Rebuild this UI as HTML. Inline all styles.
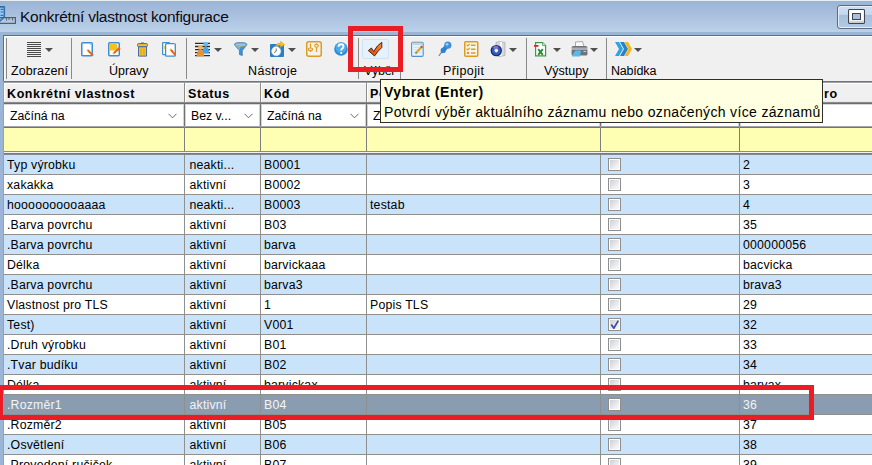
<!DOCTYPE html>
<html><head><meta charset="utf-8">
<style>
*{margin:0;padding:0;box-sizing:border-box}
html,body{width:872px;height:465px;overflow:hidden;background:#f0f0f0}
body{position:relative;font-family:"Liberation Sans",sans-serif;color:#000}
.a{position:absolute}
.t{position:absolute;white-space:pre;line-height:1}
#title{left:0;top:0;width:872px;height:36px;background:linear-gradient(#9bb4d4 0px,#a5bddb 10px,#b3cae5 24px,#bcd2ea 31px);border-top:1px solid #e8eef6}
#tband{left:0;top:32px;width:872px;height:3px;background:#9bb5d3}
#lstrip{left:0;top:35px;width:3px;height:430px;background:#9ab5d5}
#tb{left:3px;top:35px;width:869px;height:47px;background:#f0f0f0;border-top:1px solid #6b6b70;border-left:1px solid #6b6b70}
.sep{position:absolute;top:38px;width:1px;height:41px;background:#8a8a8a}
.lbl{position:absolute;top:65px;font-size:12.5px;white-space:pre;line-height:1}
.dd{position:absolute;width:0;height:0;border-left:4px solid transparent;border-right:4px solid transparent;border-top:4px solid #505050}
#grid{left:3px;top:81px;width:869px;height:384px;background:#fff}
.hl{position:absolute;left:3px;width:869px;height:1px}
.vl{position:absolute;width:1px;background:#8f8f8f}
.row{position:absolute;left:4px;width:868px;height:19px}
.c{position:absolute;top:4px;font-size:12.3px;letter-spacing:0.2px;white-space:pre;line-height:1}
.cb{position:absolute;left:608px;top:3px;width:13px;height:13px;border:1px solid #8e8e8e;background:linear-gradient(135deg,#c6cad2,#f2f2f4 70%,#fafafa);box-shadow:inset 0 0 0 1px #fff}
.hd{position:absolute;top:88px;font-size:12.5px;font-weight:bold;letter-spacing:0.6px;white-space:pre;line-height:1}
.ft{position:absolute;top:110px;font-size:12.3px;white-space:pre;line-height:1}
.chev{position:absolute;top:112.5px}
</style></head><body>

<!-- title bar -->
<div id="title" class="a"></div>
<div id="tband" class="a"></div>
<div id="lstrip" class="a"></div>
<svg class="a" style="left:0;top:5px" width="18" height="20" viewBox="0 0 18 20">
  <path d="M-1 1.5H4.6V12.2L-1 17.5Z" fill="#3d88cf" stroke="#2a64a6" stroke-width="0.9"/>
  <path d="M0 3H3.4V11.5L0 14.5Z" fill="#9ccaf0"/>
  <path d="M0.5 4.3h2.8M0.5 7h2.8M0.5 10.3h2.8" stroke="#2f6fb8" stroke-width="1.2"/>
  <rect x="-1" y="12.6" width="16.4" height="5.8" fill="none" stroke="#5b5b5e" stroke-width="1.2"/>
  <path d="M6.5 13v2.6M9 13v2M12.5 13v2.6" stroke="#666" stroke-width="1"/>
</svg>
<div class="t" style="left:20px;top:9px;font-size:15.5px;letter-spacing:-0.25px;color:#0a0a14">Konkrétní vlastnost konfigurace</div>
<!-- restore button -->
<div class="a" style="left:837px;top:5px;width:40px;height:24px;border:1px solid #5d6b80;border-radius:3px;background:linear-gradient(#d0e0f2 0,#c4d7ee 38%,#a7bfdc 42%,#b3cae5 100%);box-shadow:inset 0 0 0 1px #e6eef8"></div>
<div class="a" style="left:848px;top:9px;width:17px;height:15px;border:1px solid #3e4450;border-radius:1px;background:#fff;box-shadow:inset 0 -2px 2px #c8c8c8"></div>
<div class="a" style="left:852px;top:13px;width:9px;height:7px;border:1px solid #3e4450;background:#a9c0dc"></div>

<!-- toolbar -->
<div id="tb" class="a"></div>
<div class="a" style="left:4px;top:36px;width:868px;height:1px;background:#fff"></div>
<div class="a" style="left:4px;top:36px;width:1px;height:45px;background:#fff"></div>
<div class="sep" style="left:6px"></div>
<div class="sep" style="left:71px"></div>
<div class="sep" style="left:186px"></div>
<div class="sep" style="left:358px"></div>
<div class="sep" style="left:400px"></div>
<div class="sep" style="left:526px"></div>
<div class="sep" style="left:606px"></div>

<!-- Zobrazeni icon -->
<svg class="a" style="left:27px;top:41px" width="15" height="17" viewBox="0 0 15 17">
  <path d="M0 1.5h14M0 3.5h14M0 5.5h14M0 7.5h14M0 9.5h14M0 11.5h14M0 13.5h14M0 15.5h14" stroke="#4a4a4a" stroke-width="1"/>
</svg>
<div class="dd" style="left:45px;top:48px"></div>
<div class="lbl" style="left:11px;letter-spacing:0.1px">Zobrazení</div>

<!-- Upravy icons -->
<svg class="a" style="left:81px;top:42px" width="14" height="15" viewBox="0 0 14 15">
  <rect x="0.75" y="0.75" width="10.5" height="13" rx="1" fill="#fff" stroke="#3b8ed4" stroke-width="1.5"/>
  <path d="M8 1.5h2.5v2.5z" fill="#9ccbf0"/>
  <path d="M6.5 8l5.5 5.5" stroke="#e8641e" stroke-width="2"/>
  <path d="M6 7.5l1 1" stroke="#f3c060" stroke-width="2"/>
</svg>
<svg class="a" style="left:108px;top:42px" width="14" height="15" viewBox="0 0 14 15">
  <rect x="0.75" y="0.75" width="10.5" height="13" rx="1" fill="#fff" stroke="#3b8ed4" stroke-width="1.5"/>
  <path d="M2 2h6.5l1 1.5v5h-7.5z" fill="#f9bf1c"/>
  <path d="M5.5 11.5l6.5-6" stroke="#e8641e" stroke-width="2"/>
  <path d="M5 12l1-1" stroke="#f3c060" stroke-width="2"/>
</svg>
<svg class="a" style="left:137px;top:42px" width="11" height="15" viewBox="0 0 11 15">
  <path d="M3.5 1.5l2-1.2 2 1.2z" fill="#f8c12c" stroke="#4a6ea0" stroke-width="0.7"/>
  <rect x="0.6" y="1.6" width="9.8" height="3" rx="0.8" fill="#f8c12c" stroke="#4a6ea0" stroke-width="1"/>
  <path d="M1.5 4.8h8v9.3h-8z" fill="#f8c12c" stroke="#4a6ea0" stroke-width="1"/>
  <path d="M4 6.5v6M7 6.5v6" stroke="#d99a10" stroke-width="1"/>
</svg>
<svg class="a" style="left:162px;top:42px" width="14" height="15" viewBox="0 0 14 15">
  <rect x="0.6" y="0.6" width="7" height="12" rx="0.8" fill="#fff" stroke="#3b8ed4" stroke-width="1.2"/>
  <rect x="1.5" y="4" width="1.2" height="3" fill="#f9bf1c"/>
  <rect x="3.6" y="1.6" width="9.7" height="12.6" rx="1" fill="#fff" stroke="#3b8ed4" stroke-width="1.3"/>
  <path d="M11 1.8h2v2z" fill="#9ccbf0"/>
  <path d="M8.5 7.5l5 5.5" stroke="#e8641e" stroke-width="2"/>
  <path d="M8 7l1 1" stroke="#f3c060" stroke-width="1.8"/>
</svg>
<div class="lbl" style="left:109px">Úpravy</div>

<!-- Nastroje icons -->
<svg class="a" style="left:195px;top:42px" width="16" height="15" viewBox="0 0 16 15">
  <path d="M0 1.3h15M0 4.5h15M0 7.7h15M0 10.7h15M0 13.7h15" stroke="#2a2a2a" stroke-width="1.3"/>
  <circle cx="10.8" cy="2.3" r="2.4" fill="#6ab8e8"/>
  <path d="M7.2 11.2Q7.6 4.8 10.8 4.4Q14 4.8 14.4 11.2z" fill="#4aa3de"/>
  <circle cx="5.4" cy="5.6" r="2.4" fill="#f9b35a"/>
  <path d="M1.6 14.2Q2 8.2 5.4 7.6Q8.8 8.2 9.2 14.2z" fill="#f38d24"/>
</svg>
<div class="dd" style="left:214px;top:48px"></div>
<svg class="a" style="left:234px;top:42px" width="14" height="14" viewBox="0 0 14 14">
  <path d="M0.4 2.8Q0.4 0.4 6.7 0.4Q13 0.4 13 2.8L8.3 8.6V13.6L5.4 12.6V8.6Z" fill="#3b93d6" stroke="#2a6aa8" stroke-width="0.6"/>
  <path d="M5.4 8.6L2 4h5z" fill="#6ab8ea"/>
  <ellipse cx="6.7" cy="2.7" rx="5.6" ry="1.5" fill="#8ccaf0" stroke="#d9a030" stroke-width="0.9"/>
</svg>
<div class="dd" style="left:251px;top:48px"></div>
<svg class="a" style="left:270px;top:41px" width="15" height="16" viewBox="0 0 15 16">
  <rect x="0" y="3" width="14" height="13" rx="1" fill="#2a7ec4"/>
  <circle cx="6.2" cy="10.2" r="4.6" fill="#fff" stroke="#cfd8e0" stroke-width="0.6"/>
  <path d="M6.2 7.5v2.7l-2 1.5" stroke="#4a5a6a" stroke-width="0.9" fill="none"/>
  <path d="M5.5 5.5Q7 1.5 11 2.2L10.4 0.2L14.6 3.5L10.2 6.4L10.8 4.4Q8 4 5.5 5.5z" fill="#f9c01a" stroke="#e09a10" stroke-width="0.5"/>
</svg>
<div class="dd" style="left:288px;top:48px"></div>
<svg class="a" style="left:306px;top:41px" width="16" height="16" viewBox="0 0 16 16">
  <rect x="0.75" y="0.75" width="14.5" height="14.5" rx="2" fill="#f6f2ea" stroke="#dc9c22" stroke-width="1.5"/>
  <path d="M4.5 2.5v8.5M10.5 2.5v8.5" stroke="#dc9c22" stroke-width="1.2"/>
  <ellipse cx="4.5" cy="8.3" rx="2.2" ry="1.3" fill="#f6f2ea" stroke="#dc9c22" stroke-width="1.1"/>
  <ellipse cx="10.5" cy="4.8" rx="1.8" ry="1.4" fill="#f6f2ea" stroke="#dc9c22" stroke-width="1.1"/>
</svg>
<svg class="a" style="left:334px;top:42px" width="14" height="14" viewBox="0 0 14 14">
  <circle cx="7" cy="7" r="6.8" fill="#2c8fd6"/>
  <circle cx="7" cy="5.6" r="5.4" fill="#4caaea"/>
  <path d="M4.6 4.8Q4.6 2.3 7 2.3Q9.5 2.3 9.5 4.6Q9.5 6 7.9 6.9Q7.2 7.3 7.2 8.6" stroke="#fff" stroke-width="1.9" fill="none"/>
  <circle cx="7.2" cy="11" r="1.1" fill="#fff"/>
</svg>
<div class="lbl" style="left:248px;letter-spacing:0.35px">Nástroje</div>

<!-- Vyber -->
<div class="a" style="left:362px;top:39px;width:27px;height:20px;background:#e5f1fb;border:1px solid #cde3f6;border-radius:2px"></div>
<svg class="a" style="left:366px;top:41px" width="18" height="17" viewBox="0 0 18 17">
  <defs><linearGradient id="ck" x1="0" y1="1" x2="1" y2="0"><stop offset="0" stop-color="#e0400e"/><stop offset="1" stop-color="#f59030"/></linearGradient></defs>
  <path d="M2.3 9.6L5.4 7L7.7 10.5Q11 4.2 15.8 1.3L15.8 6.5Q12 9.8 8.5 15Z" fill="url(#ck)" stroke="#3a1a0a" stroke-width="0.9" stroke-linejoin="round"/>
</svg>
<div class="lbl" style="left:364px;letter-spacing:-0.3px">Výběr</div>

<!-- Pripojit -->
<svg class="a" style="left:411px;top:41px" width="13" height="16" viewBox="0 0 13 16">
  <rect x="0.6" y="1.2" width="11.6" height="14.2" rx="1.2" fill="#e6f2fc" stroke="#4f92d2" stroke-width="1.1"/>
  <path d="M2 3h9" stroke="#a8cdee" stroke-width="1.5"/>
  <path d="M2.5 1.2h1M5.5 1.2h1M8.5 1.2h1" stroke="#e8c040" stroke-width="1.4"/>
  <path d="M2.5 6.5h8M2.5 9h8M2.5 11.5h8" stroke="#c6dff4" stroke-width="0.8"/>
  <path d="M5.2 11.8L10.8 5.8" stroke="#f0a21e" stroke-width="2.2"/>
  <path d="M10 6.6l1.2-1.3" stroke="#d04020" stroke-width="2.2"/>
  <path d="M4.6 12.5l0.8-0.9" stroke="#555" stroke-width="1.5"/>
</svg>
<svg class="a" style="left:438px;top:41px" width="14" height="16" viewBox="0 0 14 16">
  <path d="M0.8 14.8L4.5 10.2" stroke="#888" stroke-width="1.3"/>
  <path d="M3.2 8.2L6.8 4.6L9.8 7.6L6.2 11.2Z" fill="#2a78c8"/>
  <circle cx="9.8" cy="4.2" r="3.6" fill="#3a92dc"/>
  <circle cx="9" cy="3.3" r="1.4" fill="#9ad0f6"/>
  <circle cx="5.2" cy="9.4" r="2.6" fill="#2f84d2"/>
</svg>
<svg class="a" style="left:464px;top:41px" width="15" height="16" viewBox="0 0 15 16">
  <rect x="0.75" y="0.75" width="13" height="14.5" rx="1" fill="#f8f4ea" stroke="#dc9c22" stroke-width="1.5"/>
  <path d="M2.6 3.6l1.2 1.2 2-2M2.6 7.6l1.2 1.2 2-2" stroke="#dc9c22" stroke-width="1.2" fill="none"/>
  <circle cx="4" cy="12" r="1.3" fill="#dc9c22"/>
  <path d="M7 4.2h4.5M7 8.2h4.5M7 12h4.5" stroke="#dc9c22" stroke-width="1.4"/>
</svg>
<svg class="a" style="left:490px;top:41px" width="16" height="16" viewBox="0 0 16 16">
  <path d="M6 1.5L9.5 0.5L15 1.5V14.5L9.5 15.5L6 14.5Z" fill="#d6d8dc" stroke="#9a9ea4" stroke-width="0.6"/>
  <path d="M11 1v14" stroke="#fff" stroke-width="1.5"/>
  <circle cx="6.3" cy="9.6" r="5.7" fill="#1a2a6a"/>
  <circle cx="6.3" cy="9.6" r="4.4" fill="#3060c0"/>
  <path d="M6.3 9.6L2.5 6.5A4.4 4.4 0 0 1 8.5 5.8Z" fill="#8a6ad8"/>
  <circle cx="6.3" cy="9.6" r="1.8" fill="#f4f0d8"/>
</svg>
<div class="dd" style="left:509px;top:48px"></div>
<div class="lbl" style="left:443px;letter-spacing:0.4px">Připojit</div>

<!-- Vystupy -->
<svg class="a" style="left:534px;top:41px" width="13" height="16" viewBox="0 0 13 16">
  <path d="M1.6 1.6h7l3 3v10.3h-10z" fill="#fff" stroke="#3a9a48" stroke-width="1.2"/>
  <path d="M8.6 1.6v3h3" fill="#d8f0d8" stroke="#3a9a48" stroke-width="0.8"/>
  <rect x="0" y="4" width="4.5" height="1.8" fill="#d42a2a"/>
  <path d="M4.2 8.2l4.6 5.6M8.8 8.2l-4.6 5.6" stroke="#2a8a38" stroke-width="1.9"/>
</svg>
<div class="dd" style="left:553px;top:48px"></div>
<svg class="a" style="left:571px;top:41px" width="17" height="16" viewBox="0 0 17 16">
  <path d="M4.5 1L11.5 0.5L13 5.5H4.5Z" fill="#fafafa" stroke="#8a8a8a" stroke-width="0.7"/>
  <path d="M0.8 6.2Q1 5 2.5 5H14.5Q16 5 16.2 6.2L16.5 13Q16.5 14.5 15 14.5H2Q0.5 14.5 0.5 13Z" fill="#6e747c"/>
  <path d="M1 6.5H16V9H1Z" fill="#a8aeb4"/>
  <path d="M12.5 10.5h2.5" stroke="#d0d4d8" stroke-width="1"/>
  <path d="M2.5 12L4.5 9.5H10L9 15.5H1Z" fill="#58b8ec"/>
</svg>
<div class="dd" style="left:590px;top:48px"></div>
<div class="lbl" style="left:544px">Výstupy</div>

<!-- Nabidka -->
<svg class="a" style="left:615px;top:42px" width="17" height="14" viewBox="0 0 17 14">
  <path d="M0 0h4l4 7-4 7h-4l4-7z" fill="#29a4e6"/>
  <path d="M5 0h4l4 7-4 7h-4l4-7z" fill="#2d7fc8"/>
  <path d="M9.5 0h3.5l4 7-4 7h-3.5l4-7z" fill="#f5b51c"/>
</svg>
<div class="dd" style="left:634px;top:48px"></div>
<div class="lbl" style="left:611px;letter-spacing:-0.2px">Nabídka</div>

<!-- grid -->
<div id="grid" class="a"></div>
<!-- header -->
<div class="a" style="left:3px;top:81px;width:869px;height:23px;background:#f0f0f0;border-top:1px solid #72767e"></div>
<div class="hl" style="top:101px;background:#e6e6e6"></div>
<div class="hl" style="top:102px;background:#8c8c8c"></div>
<div class="hl" style="top:103px;background:#6c6c6c"></div>
<div class="hl" style="top:104px;background:#d8d8d8"></div>
<div class="a" style="left:4px;top:82px;width:868px;height:1px;background:#a0a0a0"></div>
<div class="a" style="left:4px;top:83px;width:868px;height:1px;background:#fff"></div>
<div class="a" style="left:4px;top:83px;width:1px;height:19px;background:#fff"></div>
<div class="a" style="left:184px;top:83px;width:1px;height:20px;background:#8c8c8c"></div>
<div class="a" style="left:185px;top:83px;width:1px;height:19px;background:#fff"></div>
<div class="a" style="left:260px;top:83px;width:1px;height:20px;background:#8c8c8c"></div>
<div class="a" style="left:261px;top:83px;width:1px;height:19px;background:#fff"></div>
<div class="a" style="left:366px;top:83px;width:1px;height:20px;background:#8c8c8c"></div>
<div class="a" style="left:367px;top:83px;width:1px;height:19px;background:#fff"></div>
<div class="a" style="left:600px;top:83px;width:1px;height:20px;background:#8c8c8c"></div>
<div class="a" style="left:739px;top:83px;width:1px;height:20px;background:#8c8c8c"></div>
<div class="hd" style="left:7px">Konkrétní vlastnost</div>
<div class="hd" style="left:188px">Status</div>
<div class="hd" style="left:264px">Kód</div>
<div class="hd" style="left:370px">Popis</div>
<div class="hd" style="left:743px">Číslo</div><div class="hd" style="left:824px">ro</div>

<!-- filter row -->
<div class="a" style="left:4px;top:105px;width:868px;height:21px;background:#fff"></div>
<div class="hl" style="top:126px;background:#a2a2a8"></div>
<div class="hl" style="top:127px;background:#72727c"></div>
<div class="a" style="left:183px;top:104px;width:3px;height:22px;background:linear-gradient(90deg,#d4d4d4 0,#d4d4d4 1px,#727272 1px,#727272 2px,#d4d4d4 2px)"></div>
<div class="a" style="left:259px;top:104px;width:3px;height:22px;background:linear-gradient(90deg,#d4d4d4 0,#d4d4d4 1px,#727272 1px,#727272 2px,#d4d4d4 2px)"></div>
<div class="a" style="left:365px;top:104px;width:3px;height:22px;background:linear-gradient(90deg,#d4d4d4 0,#d4d4d4 1px,#727272 1px,#727272 2px,#d4d4d4 2px)"></div>
<div class="a" style="left:599px;top:104px;width:3px;height:22px;background:linear-gradient(90deg,#d4d4d4 0,#d4d4d4 1px,#727272 1px,#727272 2px,#d4d4d4 2px)"></div>
<div class="a" style="left:738px;top:104px;width:3px;height:22px;background:linear-gradient(90deg,#d4d4d4 0,#d4d4d4 1px,#727272 1px,#727272 2px,#d4d4d4 2px)"></div>
<div class="ft" style="left:10px">Začíná na</div>
<div class="ft" style="left:191px">Bez v...</div>
<div class="ft" style="left:267px">Začíná na</div>
<div class="ft" style="left:373px">Začíná na</div>
<svg class="chev" style="left:168px" width="10" height="6"><path d="M0.5 0.8l4 4 4-4" stroke="#5a5a5a" stroke-width="0.9" fill="none"/></svg>
<svg class="chev" style="left:244px" width="10" height="6"><path d="M0.5 0.8l4 4 4-4" stroke="#5a5a5a" stroke-width="0.9" fill="none"/></svg>
<svg class="chev" style="left:350px" width="10" height="6"><path d="M0.5 0.8l4 4 4-4" stroke="#5a5a5a" stroke-width="0.9" fill="none"/></svg>

<!-- yellow row -->
<div class="a" style="left:4px;top:128px;width:868px;height:23px;background:#ffffb4"></div>
<div class="a" style="left:184px;top:127px;width:1px;height:24px;background:#7e7e7e"></div>
<div class="a" style="left:260px;top:127px;width:1px;height:24px;background:#7e7e7e"></div>
<div class="a" style="left:366px;top:127px;width:1px;height:24px;background:#7e7e7e"></div>
<div class="a" style="left:600px;top:127px;width:1px;height:24px;background:#7e7e7e"></div>
<div class="a" style="left:739px;top:127px;width:1px;height:24px;background:#7e7e7e"></div>
<div class="hl" style="top:151px;background:#8a8b92"></div>
<div class="hl" style="top:152px;background:#f2f2f2"></div>
<div class="hl" style="top:153px;background:#777b84"></div>
<div class="hl" style="top:154px;background:#858891"></div>

<div class="row" style="top:155px;background:#c9e3fb;color:#000">
<div class="c" style="left:3px">Typ výrobku</div>
<div class="c" style="left:185.5px">neakti...</div>
<div class="c" style="left:260px">B0001</div>
<div class="c" style="left:739px">2</div>
<div class="cb" style="left:604px"></div>
</div>
<div class="hl" style="top:174px;background:#8f8f8f"></div>
<div class="row" style="top:175px;background:#fff;color:#000">
<div class="c" style="left:3px">xakakka</div>
<div class="c" style="left:185.5px">aktivní</div>
<div class="c" style="left:260px">B0002</div>
<div class="c" style="left:739px">3</div>
<div class="cb" style="left:604px"></div>
</div>
<div class="hl" style="top:194px;background:#8f8f8f"></div>
<div class="row" style="top:195px;background:#c9e3fb;color:#000">
<div class="c" style="left:3px">hoooooooooaaaa</div>
<div class="c" style="left:185.5px">neakti...</div>
<div class="c" style="left:260px">B0003</div>
<div class="c" style="left:366px">testab</div>
<div class="c" style="left:739px">4</div>
<div class="cb" style="left:604px"></div>
</div>
<div class="hl" style="top:214px;background:#8f8f8f"></div>
<div class="row" style="top:215px;background:#fff;color:#000">
<div class="c" style="left:3px">.Barva povrchu</div>
<div class="c" style="left:185.5px">aktivní</div>
<div class="c" style="left:260px">B03</div>
<div class="c" style="left:739px">35</div>
<div class="cb" style="left:604px"></div>
</div>
<div class="hl" style="top:234px;background:#8f8f8f"></div>
<div class="row" style="top:235px;background:#c9e3fb;color:#000">
<div class="c" style="left:3px">.Barva povrchu</div>
<div class="c" style="left:185.5px">aktivní</div>
<div class="c" style="left:260px">barva</div>
<div class="c" style="left:739px">000000056</div>
<div class="cb" style="left:604px"></div>
</div>
<div class="hl" style="top:254px;background:#8f8f8f"></div>
<div class="row" style="top:255px;background:#fff;color:#000">
<div class="c" style="left:3px">Délka</div>
<div class="c" style="left:185.5px">aktivní</div>
<div class="c" style="left:260px">barvickaaa</div>
<div class="c" style="left:739px">bacvicka</div>
<div class="cb" style="left:604px"></div>
</div>
<div class="hl" style="top:274px;background:#8f8f8f"></div>
<div class="row" style="top:275px;background:#c9e3fb;color:#000">
<div class="c" style="left:3px">.Barva povrchu</div>
<div class="c" style="left:185.5px">aktivní</div>
<div class="c" style="left:260px">barva3</div>
<div class="c" style="left:739px">brava3</div>
<div class="cb" style="left:604px"></div>
</div>
<div class="hl" style="top:294px;background:#8f8f8f"></div>
<div class="row" style="top:295px;background:#fff;color:#000">
<div class="c" style="left:3px">Vlastnost pro TLS</div>
<div class="c" style="left:185.5px">aktivní</div>
<div class="c" style="left:260px">1</div>
<div class="c" style="left:366px">Popis TLS</div>
<div class="c" style="left:739px">29</div>
<div class="cb" style="left:604px"></div>
</div>
<div class="hl" style="top:314px;background:#8f8f8f"></div>
<div class="row" style="top:315px;background:#c9e3fb;color:#000">
<div class="c" style="left:3px">Test)</div>
<div class="c" style="left:185.5px">aktivní</div>
<div class="c" style="left:260px">V001</div>
<div class="c" style="left:739px">32</div>
<div class="cb" style="left:604px"></div>
<svg class="a" style="left:606px;top:4px" width="11" height="11" viewBox="0 0 11 11"><path d="M1.3 5.6L3.8 9.2L8.3 1.6" stroke="#3a4fa0" stroke-width="1.7" fill="none" stroke-linejoin="round"/></svg>
</div>
<div class="hl" style="top:334px;background:#8f8f8f"></div>
<div class="row" style="top:335px;background:#fff;color:#000">
<div class="c" style="left:3px">.Druh výrobku</div>
<div class="c" style="left:185.5px">aktivní</div>
<div class="c" style="left:260px">B01</div>
<div class="c" style="left:739px">33</div>
<div class="cb" style="left:604px"></div>
</div>
<div class="hl" style="top:354px;background:#8f8f8f"></div>
<div class="row" style="top:355px;background:#c9e3fb;color:#000">
<div class="c" style="left:3px">.Tvar budíku</div>
<div class="c" style="left:185.5px">aktivní</div>
<div class="c" style="left:260px">B02</div>
<div class="c" style="left:739px">34</div>
<div class="cb" style="left:604px"></div>
</div>
<div class="hl" style="top:374px;background:#8f8f8f"></div>
<div class="row" style="top:375px;background:#fff;color:#000">
<div class="c" style="left:3px">Délka</div>
<div class="c" style="left:185.5px">aktivní</div>
<div class="c" style="left:260px">barvickax</div>
<div class="c" style="left:739px">barvax</div>
<div class="cb" style="left:604px"></div>
</div>
<div class="hl" style="top:394px;background:#8f8f8f"></div>
<div class="row" style="top:395px;background:#8a9db0;color:#f4f4f4">
<div class="c" style="left:3px">.Rozměr1</div>
<div class="c" style="left:185.5px">aktivní</div>
<div class="c" style="left:260px">B04</div>
<div class="c" style="left:739px">36</div>
<div class="cb" style="left:604px"></div>
</div>
<div class="hl" style="top:414px;background:#8f8f8f"></div>
<div class="row" style="top:415px;background:#fff;color:#000">
<div class="c" style="left:3px">.Rozměr2</div>
<div class="c" style="left:185.5px">aktivní</div>
<div class="c" style="left:260px">B05</div>
<div class="c" style="left:739px">37</div>
<div class="cb" style="left:604px"></div>
</div>
<div class="hl" style="top:434px;background:#8f8f8f"></div>
<div class="row" style="top:435px;background:#c9e3fb;color:#000">
<div class="c" style="left:3px">.Osvětlení</div>
<div class="c" style="left:185.5px">aktivní</div>
<div class="c" style="left:260px">B06</div>
<div class="c" style="left:739px">38</div>
<div class="cb" style="left:604px"></div>
</div>
<div class="hl" style="top:454px;background:#8f8f8f"></div>
<div class="row" style="top:455px;background:#fff;color:#000">
<div class="c" style="left:3px">.Provedení ručiček</div>
<div class="c" style="left:185.5px">aktivní</div>
<div class="c" style="left:260px">B07</div>
<div class="c" style="left:739px">39</div>
<div class="cb" style="left:604px"></div>
</div>
<div class="hl" style="top:474px;background:#8f8f8f"></div>
<div class="vl" style="left:184px;top:155px;height:310px"></div>
<div class="vl" style="left:260px;top:155px;height:310px"></div>
<div class="vl" style="left:366px;top:155px;height:310px"></div>
<div class="vl" style="left:600px;top:155px;height:310px"></div>
<div class="vl" style="left:739px;top:155px;height:310px"></div>
<div class="vl" style="left:3px;top:81px;height:384px;background:#a0a0a0"></div>

<!-- tooltip -->
<div class="a" style="left:380px;top:79px;width:443px;height:44px;background:#ffffe1;border:1px solid #2e2e2e"></div>
<div class="t" style="left:384px;top:85px;font-size:14px;font-weight:bold;letter-spacing:0.55px">Vybrat (Enter)</div>
<div class="t" style="left:384px;top:105px;font-size:14px;letter-spacing:0.345px">Potvrdí výběr aktuálního záznamu nebo označených více záznamů</div>

<!-- red highlight boxes -->
<div class="a" style="left:348px;top:26px;width:55px;height:46px;border:5px solid #ec1c24"></div>
<div class="a" style="left:-2px;top:385px;width:816px;height:35px;border:5px solid #ec1c24"></div>
</body></html>
